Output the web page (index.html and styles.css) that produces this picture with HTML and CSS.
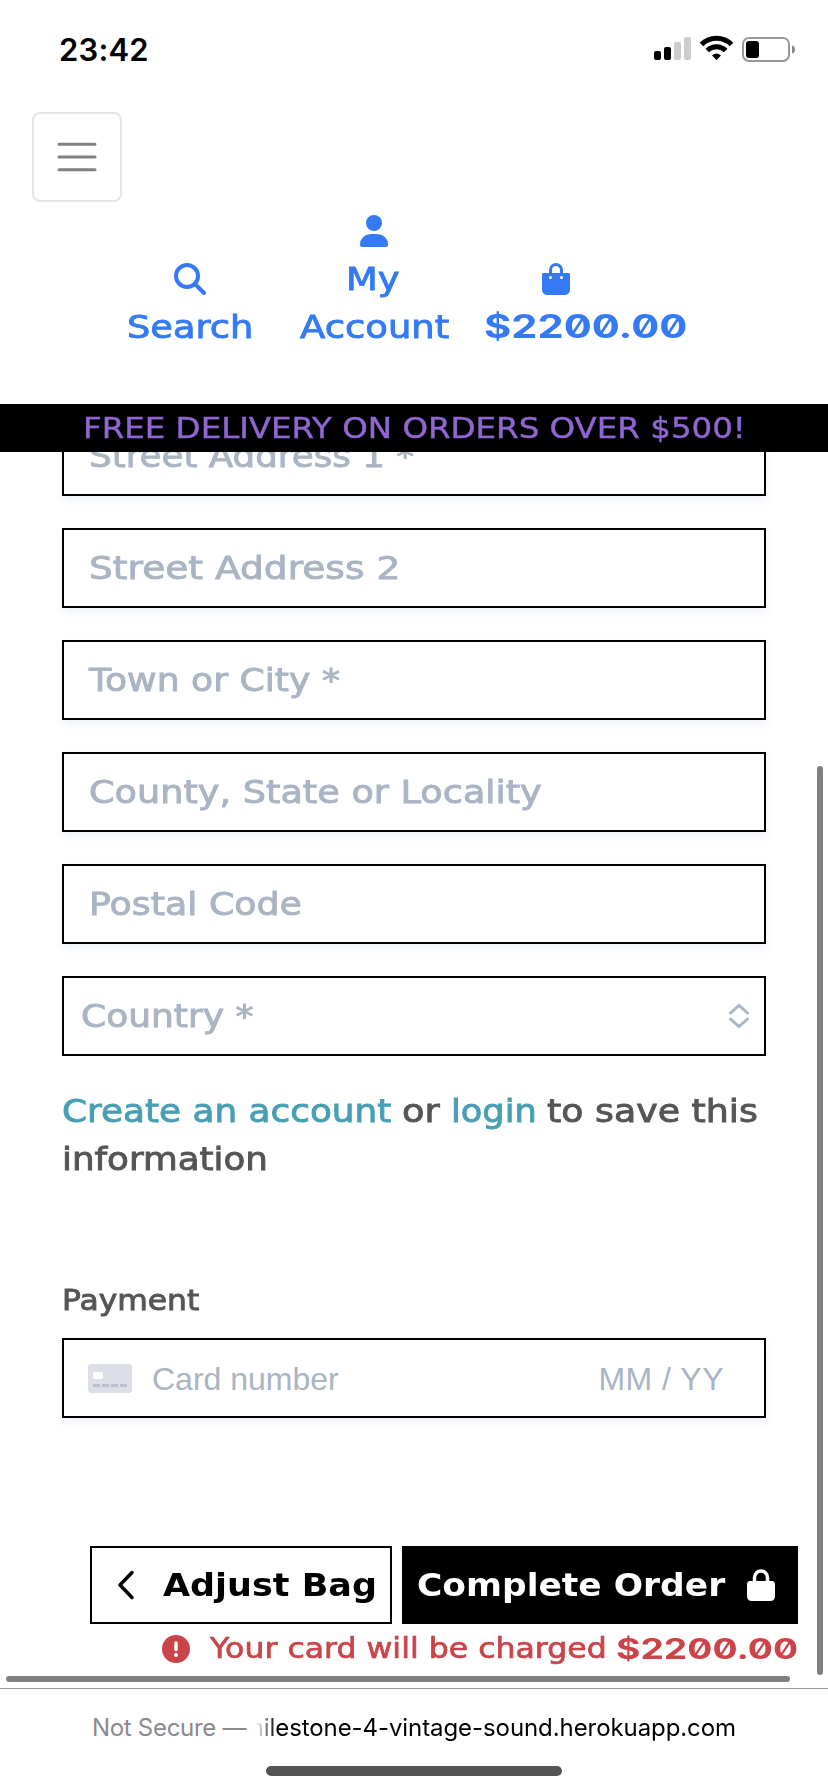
FILE: index.html
```html
<!DOCTYPE html>
<html lang="en">
<head>
<meta charset="utf-8">
<title>Checkout</title>
<link rel="stylesheet" href="styles.css">
</head>
<body>
<div class="status">
  <span class="clock">23:42</span>
  <svg class="signals" width="144" height="30" viewBox="0 0 144 30">
    <rect x="3" y="17" width="7" height="9" rx="2"/>
    <rect x="13" y="13" width="7" height="13" rx="2"/>
    <g fill="#ccc"><rect x="23" y="8" width="7" height="18" rx="2"/><rect x="33" y="3" width="7" height="23" rx="2"/></g>
    <g fill="none" stroke="#000" stroke-width="5"><path d="M50.500 10.500A21 21 0 0 1 80.500 10.500"/><path d="M56.300 16.600A13 13 0 0 1 74.700 16.600"/></g>
    <path d="M61 21.500Q65.500 17.500 70 21.500L65.500 26Z"/>
    <rect x="92" y="4" width="46" height="23" rx="6" fill="none" stroke="#999" stroke-width="2"/>
    <rect x="95" y="7" width="13" height="17" rx="3"/>
    <path d="M141 11.500Q144 12 144 15.500T141 19.500Z" fill="#888"/>
  </svg>
</div>
<header class="header">
  <div class="burger">
    <svg width="40" height="30" viewBox="0 0 40 30"><path d="M2 2.300H38M2 15H38M2 27.700H38" stroke="#808080" stroke-width="3" stroke-linecap="round"/></svg>
  </div>
  <nav class="nav">
    <a class="nav-item search">
      <span class="nav-icon"><svg width="32" height="32" viewBox="0 0 32 32" fill="none" stroke="currentColor" stroke-width="4"><circle cx="13" cy="13" r="11"/><path d="M21 21L30 30" stroke-linecap="round"/></svg></span>
      <span class="wide search-word">Search</span>
    </a>
    <a class="nav-item account">
      <span class="nav-icon"><svg width="28" height="32" viewBox="0 0 28 32" fill="currentColor"><circle cx="14" cy="8" r="8"/><path d="M11 19H17Q28 20 28 30Q28 32 26 32H2Q0 32 0 30Q0 20 11 19Z"/></svg></span>
      <span class="wide my-word">My</span>
      <span class="wide account-word">Account</span>
    </a>
    <a class="nav-item bag">
      <span class="nav-icon"><svg width="28" height="32" viewBox="0 0 28 32" fill="currentColor"><path d="M8.500 11V7a5.500 5.500 0 0 1 11 0V11" fill="none" stroke="currentColor" stroke-width="3"/><path d="M1 10H27Q28 10 28 12V26Q28 32 22 32H6Q0 32 0 26V12Q0 10 1 10Z"/><circle cx="8.500" cy="14.500" r="1.500" fill="#fff"/><circle cx="19.500" cy="14.500" r="1.500" fill="#fff"/></svg></span>
      <span class="price"><span class="price-text">$2200.00</span></span>
    </a>
  </nav>
</header>
<div class="banner"><span class="wide banner-text">FREE DELIVERY ON ORDERS OVER $500!</span></div>
<main class="main">
  <form class="form">
    <div class="field"><span class="wide street1">Street Address 1 *</span></div>
    <div class="field"><span class="wide street2">Street Address 2</span></div>
    <div class="field"><span class="wide town">Town or City *</span></div>
    <div class="field"><span class="wide county">County, State or Locality</span></div>
    <div class="field"><span class="wide postal">Postal Code</span></div>
    <div class="field select"><span class="wide country">Country *</span>
      <svg width="22" height="26" viewBox="0 0 22 26" fill="none" stroke="#aab4c3" stroke-width="3" stroke-linecap="round"><path d="M2.500 10L11 2.500L19.500 10M2.500 16L11 23.500L19.500 16"/></svg>
    </div>
  </form>
  <p class="note">
    <a class="wide create">Create an account</a>
    <span class="wide or">or</span>
    <a class="wide login">login</a>
    <span class="wide save">to save this</span>
    <span class="wide info">information</span>
  </p>
  <div class="legend"><span class="wide legend-text">Payment</span></div>
  <div class="field card">
    <svg width="44" height="30" viewBox="0 0 44 30"><rect width="44" height="29" rx="3" fill="#dcdfe8"/><rect x="5" y="8" width="10" height="7" rx="2" fill="#fff"/><path d="M5 21.500H39" stroke="#bcc0ce" stroke-width="3" stroke-dasharray="7 2"/></svg>
    <span class="number">Card number</span>
    <span class="expiry">MM / YY</span>
  </div>
  <div class="actions">
    <a class="button adjust"><svg width="18" height="30" viewBox="0 0 18 30" fill="none" stroke="#000" stroke-width="3.500" stroke-linecap="round" stroke-linejoin="round"><path d="M15 2.500L3 15L15 27.500"/></svg><span class="wide adjust-text">Adjust Bag</span></a>
    <a class="button complete"><span class="complete-label"><span class="wide complete-text">Complete Order</span></span><svg width="28" height="32" viewBox="0 0 28 32" fill="#fff"><path d="M7.500 14V8.500a6.500 6.500 0 0 1 13 0V14" fill="none" stroke="#fff" stroke-width="3.500"/><path d="M2 12H26Q28 13 28 15V27Q28 32 23 32H5Q0 32 0 27V15Q0 13 2 12Z"/></svg></a>
  </div>
  <div class="charge">
    <svg width="28" height="28" viewBox="0 0 28 28"><circle cx="14" cy="14" r="14" fill="#cb444a"/><path d="M14 8V14.500" stroke="#fff" stroke-width="3.500" stroke-linecap="round"/><circle cx="14" cy="20" r="2" fill="#fff"/></svg>
    <span class="charge-label"><span class="wide charge-text">Your card will be charged</span></span>
    <span class="price small"><span class="price-text">$2200.00</span></span>
  </div>
  <i class="scroll-y"></i>
  <i class="scroll-x"></i>
</main>
<footer class="toolbar">
  <div class="address"><span class="insecure">Not Secure —</span><span class="url"><span>milestone-4-vintage-sound.herokuapp.com</span></span></div>
  <div class="home"></div>
</footer>
</body>
</html>
```
FILE: styles.css
```css
* { box-sizing: border-box; }
body { margin: 0; width: 828px; height: 1792px; overflow: hidden; background: #fff; display: flex; flex-direction: column; font: 32px/48px "DejaVu Sans", sans-serif; color: #555; }
svg { display: block; flex: none; }
/* Extended lettering: each label sets its own horizontal stretch. */
.wide { display: block; width: max-content; transform: scaleX(var(--stretch, 1.13)); transform-origin: left; white-space: nowrap; -webkit-text-stroke: 0.9px currentColor; }
.status { height: 112px; padding: 34px 33px 0 59px; display: flex; justify-content: space-between; align-items: flex-start; color: #000; }
.clock { font: 600 31px/31px Inter, sans-serif; letter-spacing: 0.2px; }
.header { height: 292px; padding-left: 32px; }
.burger { width: 90px; height: 90px; border: 2px solid #e5e5e5; border-radius: 8px; display: flex; align-items: center; justify-content: center; }
.nav { display: flex; align-items: flex-end; height: 149px; padding-left: 95px; color: #347af6; white-space: nowrap; }
.nav-item { display: flex; flex-direction: column; }
.nav-icon { height: 48px; display: flex; align-items: center; justify-content: center; }
.search { width: 128px; }
.search .nav-icon { margin-left: -2px; }
.search-word { --stretch: 1.15; }
.account { width: 152px; margin-left: 45px; }
.account .nav-icon { margin-left: -5px; }
.my-word { --stretch: 1.15; margin-left: 46px; }
.account-word { --stretch: 1.155; }
.bag { margin-left: 32px; }
.bag .nav-icon { width: 144px; }
.price { display: block; width: 204px; height: 48px; font-family: Inter, sans-serif; font-weight: 700; font-feature-settings: "zero"; }
.price-text { display: inline-block; transform: scaleX(1.3); transform-origin: left; }
.banner { flex: none; height: 48px; padding-left: 83px; background: #000; color: #9067d2; font-size: 28px; line-height: 50px; }
.banner-text { --stretch: 1.16; -webkit-text-stroke-width: 0.4px; }
.main { position: relative; height: 1236px; flex: none; overflow: hidden; padding: 0 62px; }
.form { margin-top: -36px; display: flex; flex-direction: column; gap: 32px; }
.field { height: 80px; border: 2px solid #000; padding: 0 25px; display: flex; align-items: center; color: #aab4c3; box-shadow: 0 4px 8px rgba(50, 90, 140, 0.08); white-space: nowrap; }
.street1 { --stretch: 1.115; }
.street2 { --stretch: 1.173; }
.town { --stretch: 1.13; }
.county { --stretch: 1.145; }
.postal { --stretch: 1.135; }
.select { padding: 0 14px 0 17px; justify-content: space-between; box-shadow: none; }
.country { --stretch: 1.125; }
.note { margin: 31px -30px 0 0; display: grid; grid-template-columns: 340px 49px 96px 1fr; }
.create { --stretch: 1.12; color: #489fb5; }
.or { --stretch: 1.15; }
.login { --stretch: 1.1; color: #489fb5; }
.save { --stretch: 1.135; }
.info { --stretch: 1.115; grid-column: 1 / -1; }
.legend { margin-top: 94px; font-size: 28px; line-height: 48px; }
.legend-text { --stretch: 1.12; }
.card { margin-top: 13px; padding: 1px 40px 0 24px; font-family: "Liberation Sans", sans-serif; }
.number { margin-left: 20px; }
.expiry { margin-left: auto; letter-spacing: 0.5px; }
.actions { margin: 128px -32px 0 28px; display: flex; gap: 10px; color: #000; font-weight: 700; white-space: nowrap; }
.button { height: 78px; border: 2px solid #000; display: flex; align-items: center; }
.button .wide { -webkit-text-stroke-width: 0; }
.adjust { width: 302px; padding-left: 25px; gap: 28px; }
.adjust-text { --stretch: 1.093; }
.complete { width: 396px; padding-left: 13px; background: #000; color: #fff; }
.complete-label { width: 330px; }
.complete-text { --stretch: 1.078; }
.charge { margin: 1px -34px 0 100px; height: 48px; display: flex; align-items: center; font-size: 28px; color: #cb444a; white-space: nowrap; }
.charge-label { width: 406px; margin-left: 20px; }
.charge-text { --stretch: 1.127; -webkit-text-stroke-width: 0.7px; }
.small { width: 180px; }
.small .price-text { transform: scaleX(1.33); }
.scroll-y, .scroll-x { position: absolute; background: #808080; border-radius: 3px; }
.scroll-y { right: 5px; top: 314px; width: 6px; height: 909px; }
.scroll-x { left: 6px; bottom: 6px; width: 784px; height: 6px; }
.toolbar { height: 104px; flex: none; border-top: 1px solid #999; padding-top: 15px; display: flex; flex-direction: column; align-items: center; }
.address { width: 644px; display: flex; font: 24px/48px Inter, sans-serif; color: #000; white-space: nowrap; }
.insecure { width: 164px; color: #8a8a8e; letter-spacing: -0.3px; }
.url { width: 480px; overflow: hidden; display: flex; justify-content: flex-end; letter-spacing: -0.08px; -webkit-mask-image: linear-gradient(90deg, transparent, #000 20px); mask-image: linear-gradient(90deg, transparent, #000 20px); }
.home { margin-top: 14px; width: 296px; height: 10px; border-radius: 5px; background: #555; }
```
